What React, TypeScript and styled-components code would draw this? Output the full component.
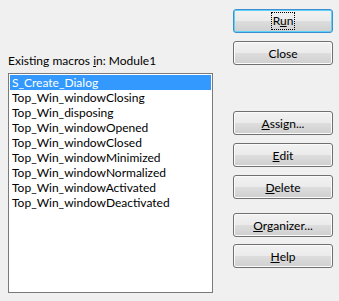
import styled, { createGlobalStyle } from "styled-components";

const GlobalStyle = createGlobalStyle`
  html, body {
    margin: 0;
    padding: 0;
    background: #f0f0f0;
  }
  body {
    font-family: Lato, "Open Sans", sans-serif;
    font-size: 12px;
    color: #000;
  }
`;

const macros = [
  "S_Create_Dialog",
  "Top_Win_windowClosing",
  "Top_Win_disposing",
  "Top_Win_windowOpened",
  "Top_Win_windowClosed",
  "Top_Win_windowMinimized",
  "Top_Win_windowNormalized",
  "Top_Win_windowActivated",
  "Top_Win_windowDeactivated",
];

function App() {
  return (
    <>
      <GlobalStyle />
      <Dialog>
        <MacroPane>
          <Label>
            Existing macros <u>i</u>n: Module1
          </Label>
          <MacroList>
            {macros.map((m, i) => (
              <MacroItem key={m} $selected={i === 0}>
                {m}
              </MacroItem>
            ))}
          </MacroList>
        </MacroPane>

        <ButtonColumn>
          <ButtonGroup>
            <Button $default>
              <FocusRect>
                R<u>u</u>n
              </FocusRect>
            </Button>
            <Button>Close</Button>
          </ButtonGroup>

          <ButtonGroup $top={46}>
            <Button>
              <u>A</u>ssign...
            </Button>
            <Button>
              <u>E</u>dit
            </Button>
            <Button>
              <u>D</u>elete
            </Button>
          </ButtonGroup>

          <ButtonGroup $top={14} $gap={7}>
            <Button>
              <u>O</u>rganizer...
            </Button>
            <Button>
              <u>H</u>elp
            </Button>
          </ButtonGroup>
        </ButtonColumn>
      </Dialog>
    </>
  );
}

const Dialog = styled.div`
  width: 339px;
  height: 301px;
  box-sizing: border-box;
  display: flex;
  padding: 9px 6px 0 8px;
  background: #f0f0f0;
`;

const MacroPane = styled.div`
  display: flex;
  flex-direction: column;
  width: 205px;
  padding-top: 44px;
`;

const Label = styled.div`
  height: 16px;
  line-height: 16px;
  margin-bottom: 4px;
  white-space: nowrap;
`;

const MacroList = styled.ul`
  list-style: none;
  margin: 0;
  padding: 1px;
  width: 205px;
  height: 220px;
  box-sizing: border-box;
  border: 1px solid #7a7a7a;
  background: #fff;
`;

const MacroItem = styled.li<{ $selected?: boolean }>`
  height: 15px;
  line-height: 15px;
  padding-left: 2px;
  white-space: nowrap;
  background: ${(p) => (p.$selected ? "#3399ff" : "transparent")};
  color: ${(p) => (p.$selected ? "#fff" : "#000")};
`;

const ButtonColumn = styled.div`
  display: flex;
  flex-direction: column;
  margin-left: 20px;
  width: 100px;
`;

const ButtonGroup = styled.div<{ $top?: number; $gap?: number }>`
  display: flex;
  flex-direction: column;
  gap: ${(p) => p.$gap ?? 8}px;
  margin-top: ${(p) => p.$top || 0}px;
`;

const Button = styled.button<{ $default?: boolean }>`
  height: 24px;
  width: 100px;
  box-sizing: border-box;
  padding: 0;
  font: inherit;
  color: #000;
  border-radius: 3px;
  border: 1px solid ${(p) => (p.$default ? "#3c8fd0" : "#707070")};
  box-shadow: inset 0 0 0 1px ${(p) => (p.$default ? "#5fd0f6" : "#fbfbfb")};
  background: linear-gradient(
    #f2f2f2 0%,
    #ebebeb 48%,
    #dddddd 52%,
    #cfcfcf 100%
  );
  display: flex;
  align-items: center;
  justify-content: center;
`;

const FocusRect = styled.span`
  outline: 1px dotted #000;
  outline-offset: 0;
  padding: 0 1px;
  line-height: 16px;
`;

export default App;
